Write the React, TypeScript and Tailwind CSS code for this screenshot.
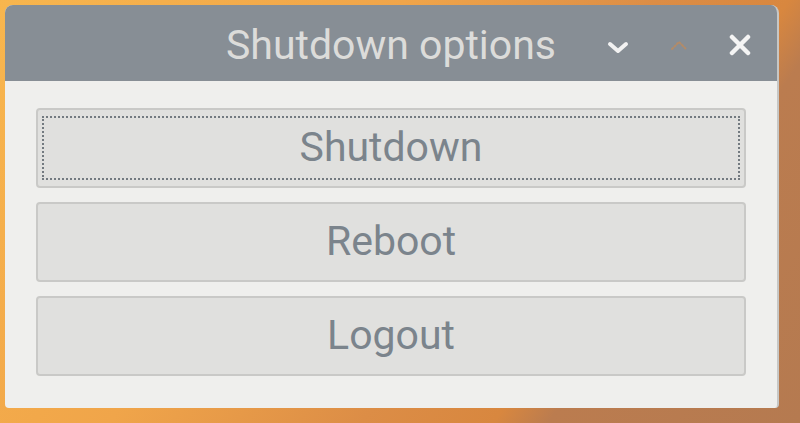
import React from "react";

function Btn({ label, focused }: { label: string; focused?: boolean }) {
  return (
    <button className="relative h-[80px] w-full rounded-[4px] border-2 border-[#c9c9c7] bg-[#e0e0de] text-[41px] leading-none text-[#7b848c] [font-family:Roboto,'Liberation_Sans',sans-serif]">
      {focused && (
        <span className="pointer-events-none absolute inset-x-[4px] inset-y-[6px] border-2 border-dotted border-[#737a80]" />
      )}
      <span className="relative top-[-1px]">{label}</span>
    </button>
  );
}

export default function App() {
  return (
    <div className="h-[423px] w-[800px] overflow-hidden bg-[linear-gradient(125deg,#f8b64e_0%,#f2a84a_30%,#f0a54a_37%,#dc8d46_60%,#d8873f_72%,#bb7c4f_77%,#b57a50_100%)] pl-[5px] pt-[5px]">
      <div className="flex h-[403px] w-[774px] flex-col overflow-hidden rounded-t-[8px] rounded-b-[4px] border-r-2 border-[#c7c7c5] bg-[#efefed]">
        <div className="relative flex h-[76px] items-start justify-center bg-[#878e95] pt-[20px]">
          <span className="text-[41px] leading-none text-[#dcdcda] [font-family:Roboto,'Liberation_Sans',sans-serif]">
            Shutdown options
          </span>
          <div className="absolute right-[26px] top-[29px] flex items-center gap-[39px]">
            <svg width="22" height="14" viewBox="0 0 22 14" className="mt-[6px]">
              <path d="M3 3 L11 10 L19 3" fill="none" stroke="#f2f2f2" strokeWidth="4" strokeLinecap="round" strokeLinejoin="round" />
            </svg>
            <svg width="22" height="14" viewBox="0 0 22 14" className="opacity-50">
              <path d="M4 11 L11 4 L18 11" fill="none" stroke="#e08a3c" strokeWidth="2" strokeLinecap="round" strokeDasharray="1.5 2" />
            </svg>
            <svg width="22" height="22" viewBox="0 0 22 22">
              <path d="M3 3 L19 19 M19 3 L3 19" fill="none" stroke="#f4f4f4" strokeWidth="4.5" strokeLinecap="round" />
            </svg>
          </div>
        </div>
        <div className="flex flex-1 flex-col gap-[14px] px-[31px] pt-[27px]">
          <Btn label="Shutdown" focused />
          <Btn label="Reboot" />
          <Btn label="Logout" />
        </div>
      </div>
    </div>
  );
}
